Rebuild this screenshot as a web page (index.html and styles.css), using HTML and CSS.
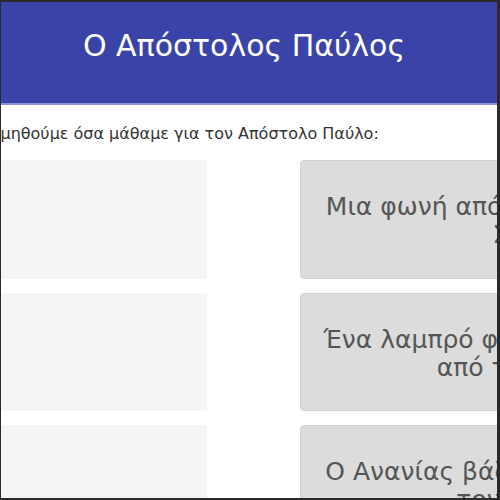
FILE: index.html
```html
<!DOCTYPE html>
<html lang="el">
<head>
    <meta charset="UTF-8">
    <meta name="viewport" content="width=device-width, initial-scale=1.0">
    <title>Ο Απόστολος Παύλος</title>
    <link rel="stylesheet" href="styles.css">
</head>
<body>
    <div class="frame">
        <header class="top">
            <h1>Ο Απόστολος Παύλος</h1>
        </header>

        <main class="content">
            <p class="intro">Ας θυμηθούμε όσα μάθαμε για τον Απόστολο Παύλο:</p>

            <div class="board">
                <div class="slot"></div>
                <div class="card">Μια φωνή από τον ουρανό μίλησε<br>Σαούλ!</div>

                <div class="slot"></div>
                <div class="card">Ένα λαμπρό φως έλαμψε ξαφνικά.<br>από τον ουρανό</div>

                <div class="slot"></div>
                <div class="card">Ο Ανανίας βάζει τα χέρια του και<br>τον θάρρεψε</div>
            </div>
        </main>
    </div>
</body>
</html>
```

FILE: styles.css
```css
body {
    margin: 0;
    background: #fff;
    font-family: 'DejaVu Sans', sans-serif;
}
.frame {
    width: 500px;
    height: 500px;
    box-sizing: border-box;
    border: 2px solid #2a2a2a;
    border-left-width: 1px;
    border-right-width: 3px;
    overflow: hidden;
}
.top {
    height: 101px;
    background: #3a44a8;
    border-bottom: 2px solid #8c91d4;
    display: flex;
    align-items: center;
    justify-content: center;
    padding-right: 10px;
}
.top h1 {
    margin: 0 0 14px;
    color: #fff;
    font-size: 30px;
    font-weight: 400;
}
.content {
    padding-top: 19px;
}
.intro {
    margin: 0 0 17px -45px;
    font-size: 16px;
    color: #333;
}
.board {
    display: grid;
    grid-template-columns: 472px 472px;
    grid-auto-rows: 118.5px;
    column-gap: 93px;
    row-gap: 14px;
    margin-left: -266px;
}
.slot {
    background: #f5f5f5;
}
.card {
    background: #dcdcdc;
    border: 1px solid #d2d2d2;
    border-radius: 4px;
    display: flex;
    align-items: center;
    justify-content: center;
    padding-top: 4px;
    text-align: center;
    white-space: nowrap;
    font-size: 25px;
    line-height: 28px;
    color: #555;
}
```
